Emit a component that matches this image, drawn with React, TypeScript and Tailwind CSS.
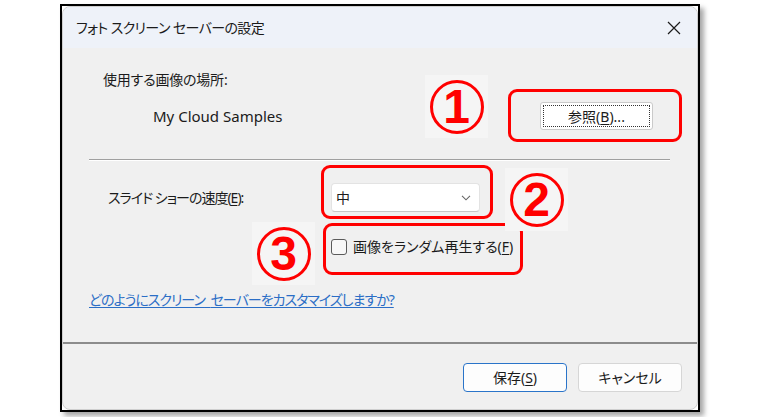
export default function App() {
  return (
    <div className="relative h-[417px] w-[763px] overflow-hidden bg-white pl-[60px] pt-[4px] font-['Noto_Sans','Noto_Sans_CJK_JP',sans-serif] text-[#1b1b1b] [font-feature-settings:'palt']">
      {/* screenshot frame */}
      <div className="h-[408px] w-[640px] border-2 border-black bg-white shadow-[4px_4px_5px_rgba(0,0,0,0.35)]">
        <div className="flex h-full flex-col overflow-hidden rounded-[8px] border border-[#cfcfcf] bg-[#f0f0f0]">
          {/* title bar */}
          <div className="flex h-[41px] shrink-0 items-center justify-between bg-[#eef2f9] pl-[13px] pr-[15px]">
            <span className="text-[14px] leading-5 tracking-[-0.6px]">フォト スクリーン セーバーの設定</span>
            <svg width="14" height="14" viewBox="0 0 14 14" className="mr-[1px]">
              <path d="M1 1 L13 13 M13 1 L1 13" stroke="#1b1b1b" strokeWidth="1.2" fill="none" />
            </svg>
          </div>

          {/* body */}
          <div className="h-[294px] shrink-0 pt-[22px] text-[14px]">
            <div className="pl-[40px] leading-5 tracking-[-0.2px]">使用する画像の場所:</div>
            <div className="mt-[12px] flex h-[28px] items-center justify-between pl-[90px] pr-[44px]">
              <span className="text-[15px] leading-5">My Cloud Samples</span>
              <div className="h-[28px] w-[113px] rounded-[3px] border border-[#cacaca] bg-white p-[2px]">
                <div className="flex h-full items-center justify-center border border-dotted border-[#333]">
                  参照(<span className="underline underline-offset-2">B</span>)...
                </div>
              </div>
            </div>

            <div className="ml-[26px] mr-[27px] mt-[29px] h-[2px] border-t border-[#a0a0a0] border-b border-b-white" />

            <div className="mt-[22px] flex h-[29px] items-center pl-[45px]">
              <span className="w-[223px] leading-5 tracking-[-1px]">
                スライド ショーの速度(<span className="underline underline-offset-2">E</span>):
              </span>
              <div className="flex h-[29px] w-[149px] items-center justify-between rounded-[4px] border border-[#e3e3e3] border-b-[#c6c6c6] bg-white pl-[4px] pr-[8px]">
                <span className="leading-5">中</span>
                <svg width="10" height="6" viewBox="0 0 10 6">
                  <path d="M1 0.8 L5 4.8 L9 0.8" stroke="#666" strokeWidth="1.1" fill="none" />
                </svg>
              </div>
            </div>

            <div className="mt-[24px] flex h-[21px] items-center pl-[268px]">
              <div className="h-[16px] w-[16px] rounded-[3px] border border-[#5a5a5a] bg-[#f7f7f7]" />
              <span className="ml-[6px] leading-5">
                画像をランダム再生する(<span className="underline underline-offset-2">F</span>)
              </span>
            </div>

            <div className="mt-[33px] pl-[26px] leading-5">
              <span className="tracking-[-1px] text-[#2b6ec6] underline underline-offset-2">
                どのようにスクリーン<span className="tracking-[2px]"> </span>セーバーをカスタマイズしますか?
              </span>
            </div>
          </div>

          {/* footer */}
          <div className="flex flex-1 justify-end gap-[11px] border-t-2 border-[#8c8c8c] pr-[15px] pt-[19px] text-[14px]">
            <div className="flex h-[29px] w-[104px] items-center justify-center rounded-[4px] border border-[#2a74c9] bg-[#fdfdfd]">
              保存(<span className="underline underline-offset-2">S</span>)
            </div>
            <div className="flex h-[29px] w-[104px] items-center justify-center rounded-[4px] border border-[#d6d6d6] bg-[#fdfdfd]">
              キャンセル
            </div>
          </div>
        </div>
      </div>

      {/* annotations */}
      <div className="absolute left-[508px] top-[89px] h-[53px] w-[174px] rounded-[9px] border-[3px] border-[#ff0000]" />
      <div className="absolute left-[321px] top-[165px] h-[54px] w-[172px] rounded-[9px] border-[3px] border-[#ff0000]" />
      <div className="absolute left-[323px] top-[223px] h-[52px] w-[200px] rounded-[9px] border-[3px] border-[#ff0000]" />

      <Marker n="1" className="left-[425px] top-[75px]" />
      <Marker n="2" className="left-[505px] top-[168px]" />
      <Marker n="3" className="left-[252px] top-[222px]" />
    </div>
  );
}

function Marker({ n, className }: { n: string; className: string }) {
  return (
    <div className={`absolute flex h-[63px] w-[63px] items-center justify-center bg-[#f5f5f5] ${className}`}>
      <div className="flex h-[54px] w-[54px] items-center justify-center rounded-full border-[3px] border-[#ff0000] font-['Liberation_Sans',sans-serif] text-[48px] font-bold leading-none text-[#ff0000]">
        {n}
      </div>
    </div>
  );
}
